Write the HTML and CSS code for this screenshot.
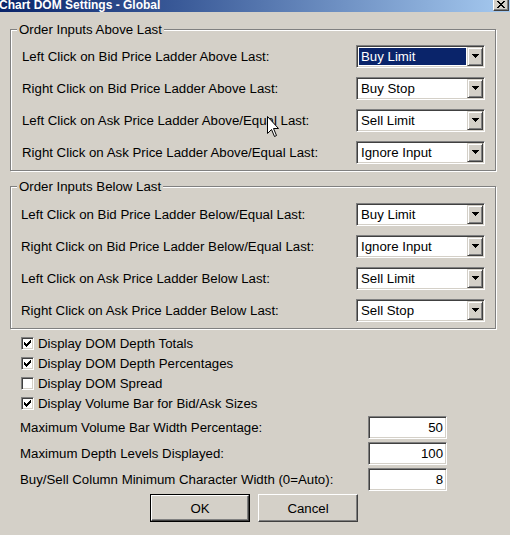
FILE: index.html
```html
<!DOCTYPE html>
<html>
<head>
<meta charset="utf-8">
<link rel="stylesheet" href="styles.css">
</head>
<body>
<div class="titlebar">
  <span class="title">Chart DOM Settings - Global</span>
  <div class="close">
    <svg width="8" height="7" viewBox="0 0 8 7" shape-rendering="crispEdges">
      <rect x="0" y="0" width="2" height="1"/><rect x="6" y="0" width="2" height="1"/>
      <rect x="1" y="1" width="2" height="1"/><rect x="5" y="1" width="2" height="1"/>
      <rect x="2" y="2" width="4" height="1"/>
      <rect x="3" y="3" width="2" height="1"/>
      <rect x="2" y="4" width="4" height="1"/>
      <rect x="1" y="5" width="2" height="1"/><rect x="5" y="5" width="2" height="1"/>
      <rect x="0" y="6" width="2" height="1"/><rect x="6" y="6" width="2" height="1"/>
    </svg>
  </div>
</div>

<div class="content">
  <fieldset class="group g1">
    <legend>Order Inputs Above Last</legend>
    <div class="row"><span class="lbl">Left Click on Bid Price Ladder Above Last:</span>
      <div class="combo"><span class="val sel">Buy Limit</span><span class="drop"><svg width="7" height="4" viewBox="0 0 7 4" shape-rendering="crispEdges"><rect x="0" y="0" width="7" height="1"/><rect x="1" y="1" width="5" height="1"/><rect x="2" y="2" width="3" height="1"/><rect x="3" y="3" width="1" height="1"/></svg></span></div></div>
    <div class="row"><span class="lbl">Right Click on Bid Price Ladder Above Last:</span>
      <div class="combo"><span class="val">Buy Stop</span><span class="drop"><svg width="7" height="4" viewBox="0 0 7 4" shape-rendering="crispEdges"><rect x="0" y="0" width="7" height="1"/><rect x="1" y="1" width="5" height="1"/><rect x="2" y="2" width="3" height="1"/><rect x="3" y="3" width="1" height="1"/></svg></span></div></div>
    <div class="row"><span class="lbl">Left Click on Ask Price Ladder Above/Equal Last:</span>
      <div class="combo"><span class="val">Sell Limit</span><span class="drop"><svg width="7" height="4" viewBox="0 0 7 4" shape-rendering="crispEdges"><rect x="0" y="0" width="7" height="1"/><rect x="1" y="1" width="5" height="1"/><rect x="2" y="2" width="3" height="1"/><rect x="3" y="3" width="1" height="1"/></svg></span></div></div>
    <div class="row"><span class="lbl">Right Click on Ask Price Ladder Above/Equal Last:</span>
      <div class="combo"><span class="val">Ignore Input</span><span class="drop"><svg width="7" height="4" viewBox="0 0 7 4" shape-rendering="crispEdges"><rect x="0" y="0" width="7" height="1"/><rect x="1" y="1" width="5" height="1"/><rect x="2" y="2" width="3" height="1"/><rect x="3" y="3" width="1" height="1"/></svg></span></div></div>
  </fieldset>

  <fieldset class="group g2">
    <legend>Order Inputs Below Last</legend>
    <div class="row"><span class="lbl">Left Click on Bid Price Ladder Below/Equal Last:</span>
      <div class="combo"><span class="val">Buy Limit</span><span class="drop"><svg width="7" height="4" viewBox="0 0 7 4" shape-rendering="crispEdges"><rect x="0" y="0" width="7" height="1"/><rect x="1" y="1" width="5" height="1"/><rect x="2" y="2" width="3" height="1"/><rect x="3" y="3" width="1" height="1"/></svg></span></div></div>
    <div class="row"><span class="lbl">Right Click on Bid Price Ladder Below/Equal Last:</span>
      <div class="combo"><span class="val">Ignore Input</span><span class="drop"><svg width="7" height="4" viewBox="0 0 7 4" shape-rendering="crispEdges"><rect x="0" y="0" width="7" height="1"/><rect x="1" y="1" width="5" height="1"/><rect x="2" y="2" width="3" height="1"/><rect x="3" y="3" width="1" height="1"/></svg></span></div></div>
    <div class="row"><span class="lbl">Left Click on Ask Price Ladder Below Last:</span>
      <div class="combo"><span class="val">Sell Limit</span><span class="drop"><svg width="7" height="4" viewBox="0 0 7 4" shape-rendering="crispEdges"><rect x="0" y="0" width="7" height="1"/><rect x="1" y="1" width="5" height="1"/><rect x="2" y="2" width="3" height="1"/><rect x="3" y="3" width="1" height="1"/></svg></span></div></div>
    <div class="row"><span class="lbl">Right Click on Ask Price Ladder Below Last:</span>
      <div class="combo"><span class="val">Sell Stop</span><span class="drop"><svg width="7" height="4" viewBox="0 0 7 4" shape-rendering="crispEdges"><rect x="0" y="0" width="7" height="1"/><rect x="1" y="1" width="5" height="1"/><rect x="2" y="2" width="3" height="1"/><rect x="3" y="3" width="1" height="1"/></svg></span></div></div>
  </fieldset>

  <div class="checks">
    <div class="check"><span class="box"><svg width="7" height="7" viewBox="0 0 7 7" shape-rendering="crispEdges"><rect x="0" y="2" width="1" height="3"/><rect x="1" y="3" width="1" height="3"/><rect x="2" y="4" width="1" height="3"/><rect x="3" y="3" width="1" height="3"/><rect x="4" y="2" width="1" height="3"/><rect x="5" y="1" width="1" height="3"/><rect x="6" y="0" width="1" height="3"/></svg></span>Display DOM Depth Totals</div>
    <div class="check"><span class="box"><svg width="7" height="7" viewBox="0 0 7 7" shape-rendering="crispEdges"><rect x="0" y="2" width="1" height="3"/><rect x="1" y="3" width="1" height="3"/><rect x="2" y="4" width="1" height="3"/><rect x="3" y="3" width="1" height="3"/><rect x="4" y="2" width="1" height="3"/><rect x="5" y="1" width="1" height="3"/><rect x="6" y="0" width="1" height="3"/></svg></span>Display DOM Depth Percentages</div>
    <div class="check"><span class="box"></span>Display DOM Spread</div>
    <div class="check"><span class="box"><svg width="7" height="7" viewBox="0 0 7 7" shape-rendering="crispEdges"><rect x="0" y="2" width="1" height="3"/><rect x="1" y="3" width="1" height="3"/><rect x="2" y="4" width="1" height="3"/><rect x="3" y="3" width="1" height="3"/><rect x="4" y="2" width="1" height="3"/><rect x="5" y="1" width="1" height="3"/><rect x="6" y="0" width="1" height="3"/></svg></span>Display Volume Bar for Bid/Ask Sizes</div>
  </div>

  <div class="fields">
    <div class="field"><span class="lbl">Maximum Volume Bar Width Percentage:</span><div class="edit">50</div></div>
    <div class="field"><span class="lbl">Maximum Depth Levels Displayed:</span><div class="edit">100</div></div>
    <div class="field"><span class="lbl">Buy/Sell Column Minimum Character Width (0=Auto):</span><div class="edit">8</div></div>
  </div>

  <div class="buttons">
    <div class="btn default"><span class="btn-in">OK</span></div>
    <div class="btn"><span class="btn-in">Cancel</span></div>
  </div>
</div>

<svg class="cursor" width="13" height="22" viewBox="0 0 13 22">
  <polygon points="0.5,0.5 0.5,17.5 4.5,13.5 7.5,20.5 9.5,19.5 6.5,12.5 11.5,12.5" fill="#fff" stroke="#000" stroke-width="1" stroke-linejoin="miter"/>
</svg>
</body>
</html>
```

FILE: styles.css
```css
* { box-sizing: border-box; }

html, body {
  margin: 0;
  padding: 0;
  width: 510px;
  height: 535px;
  overflow: hidden;
  background: #d4d0c8;
  font-family: "Liberation Sans", Arial, sans-serif;
  font-size: 13.25px;
  color: #000;
}

body { position: relative; }

.titlebar {
  height: 12px;
  display: flex;
  align-items: flex-start;
  justify-content: space-between;
  background: linear-gradient(to right, #0a246a 0%, #3a5a98 35%, #a6caf0 100%);
  overflow: hidden;
}

.title {
  margin-left: -1px;
  color: #fff;
  font-weight: bold;
  font-size: 12px;
  line-height: 11px;
  white-space: nowrap;
}

.close {
  width: 16px;
  height: 14px;
  margin-top: -3px;
  margin-right: 1px;
  background: #d4d0c8;
  border: 1px solid;
  border-color: #fff #404040 #404040 #fff;
  box-shadow: inset -1px -1px #808080;
  display: flex;
  align-items: center;
  justify-content: center;
  padding-top: 1px;
}

.close svg { fill: #000; display: block; }

.content { padding-top: 10px; }

.group {
  margin: 0 0 0 10px;
  width: 486px;
  min-width: 0;
  padding: 3px 0 2px 0;
  border: 1px solid #808080;
  box-shadow: inset 1px 1px #fff, 1px 1px #fff;
}

.g2 { margin-top: 8px; padding-top: 4px; }

.group legend {
  margin-left: 6px;
  padding: 0 2px;
  line-height: 15px;
  background: #d4d0c8;
}

.row {
  height: 32px;
  display: flex;
  align-items: center;
  justify-content: space-between;
  padding: 0 10px 0 11px;
}

.g2 .row { padding-left: 10px; }

.lbl { white-space: nowrap; }

.combo {
  width: 129px;
  height: 23px;
  display: flex;
  align-items: stretch;
  background: #fff;
  border: 1px solid;
  border-color: #808080 #fff #fff #808080;
  box-shadow: inset 1px 1px #404040, inset -1px -1px #d4d0c8;
  padding: 1px;
}

.val {
  flex: 1;
  margin: 1px;
  padding-left: 2px;
  line-height: 17px;
  white-space: nowrap;
}

.val.sel {
  background: #0a246a;
  color: #fff;
}

.drop {
  width: 16px;
  background: #d4d0c8;
  border: 1px solid;
  border-color: #d4d0c8 #404040 #404040 #d4d0c8;
  box-shadow: inset 1px 1px #fff, inset -1px -1px #808080;
  display: flex;
  align-items: center;
  justify-content: center;
}

.drop svg { fill: #000; display: block; }

.checks { margin-top: 4px; }

.check {
  height: 20px;
  display: flex;
  align-items: center;
  padding-left: 21px;
  white-space: nowrap;
}

.box {
  width: 13px;
  height: 13px;
  margin-right: 4px;
  background: #fff;
  border: 1px solid;
  border-color: #808080 #fff #fff #808080;
  box-shadow: inset 1px 1px #404040, inset -1px -1px #d4d0c8;
  display: flex;
  align-items: center;
  justify-content: center;
}

.box svg { fill: #000; display: block; }

.fields { margin-top: 1px; }

.field {
  height: 26px;
  display: flex;
  align-items: center;
  justify-content: space-between;
  padding: 0 63px 0 20px;
}

.edit {
  width: 79px;
  height: 23px;
  background: #fff;
  border: 1px solid;
  border-color: #808080 #fff #fff #808080;
  box-shadow: inset 1px 1px #404040, inset -1px -1px #d4d0c8;
  text-align: right;
  padding-right: 3px;
  line-height: 21px;
}

.buttons {
  margin-top: 2px;
  display: flex;
  gap: 8px;
  padding-left: 150px;
}

.btn {
  width: 100px;
  height: 28px;
  display: flex;
  border: 1px solid;
  border-color: #fff #404040 #404040 #fff;
  box-shadow: inset -1px -1px #808080;
}

.btn-in {
  flex: 1;
  display: flex;
  align-items: center;
  justify-content: center;
}

.btn.default {
  border-color: #000;
}

.btn.default .btn-in {
  border: 1px solid;
  border-color: #fff #404040 #404040 #fff;
  box-shadow: inset -1px -1px #808080;
}

.cursor {
  position: absolute;
  left: 267px;
  top: 116px;
}
```
